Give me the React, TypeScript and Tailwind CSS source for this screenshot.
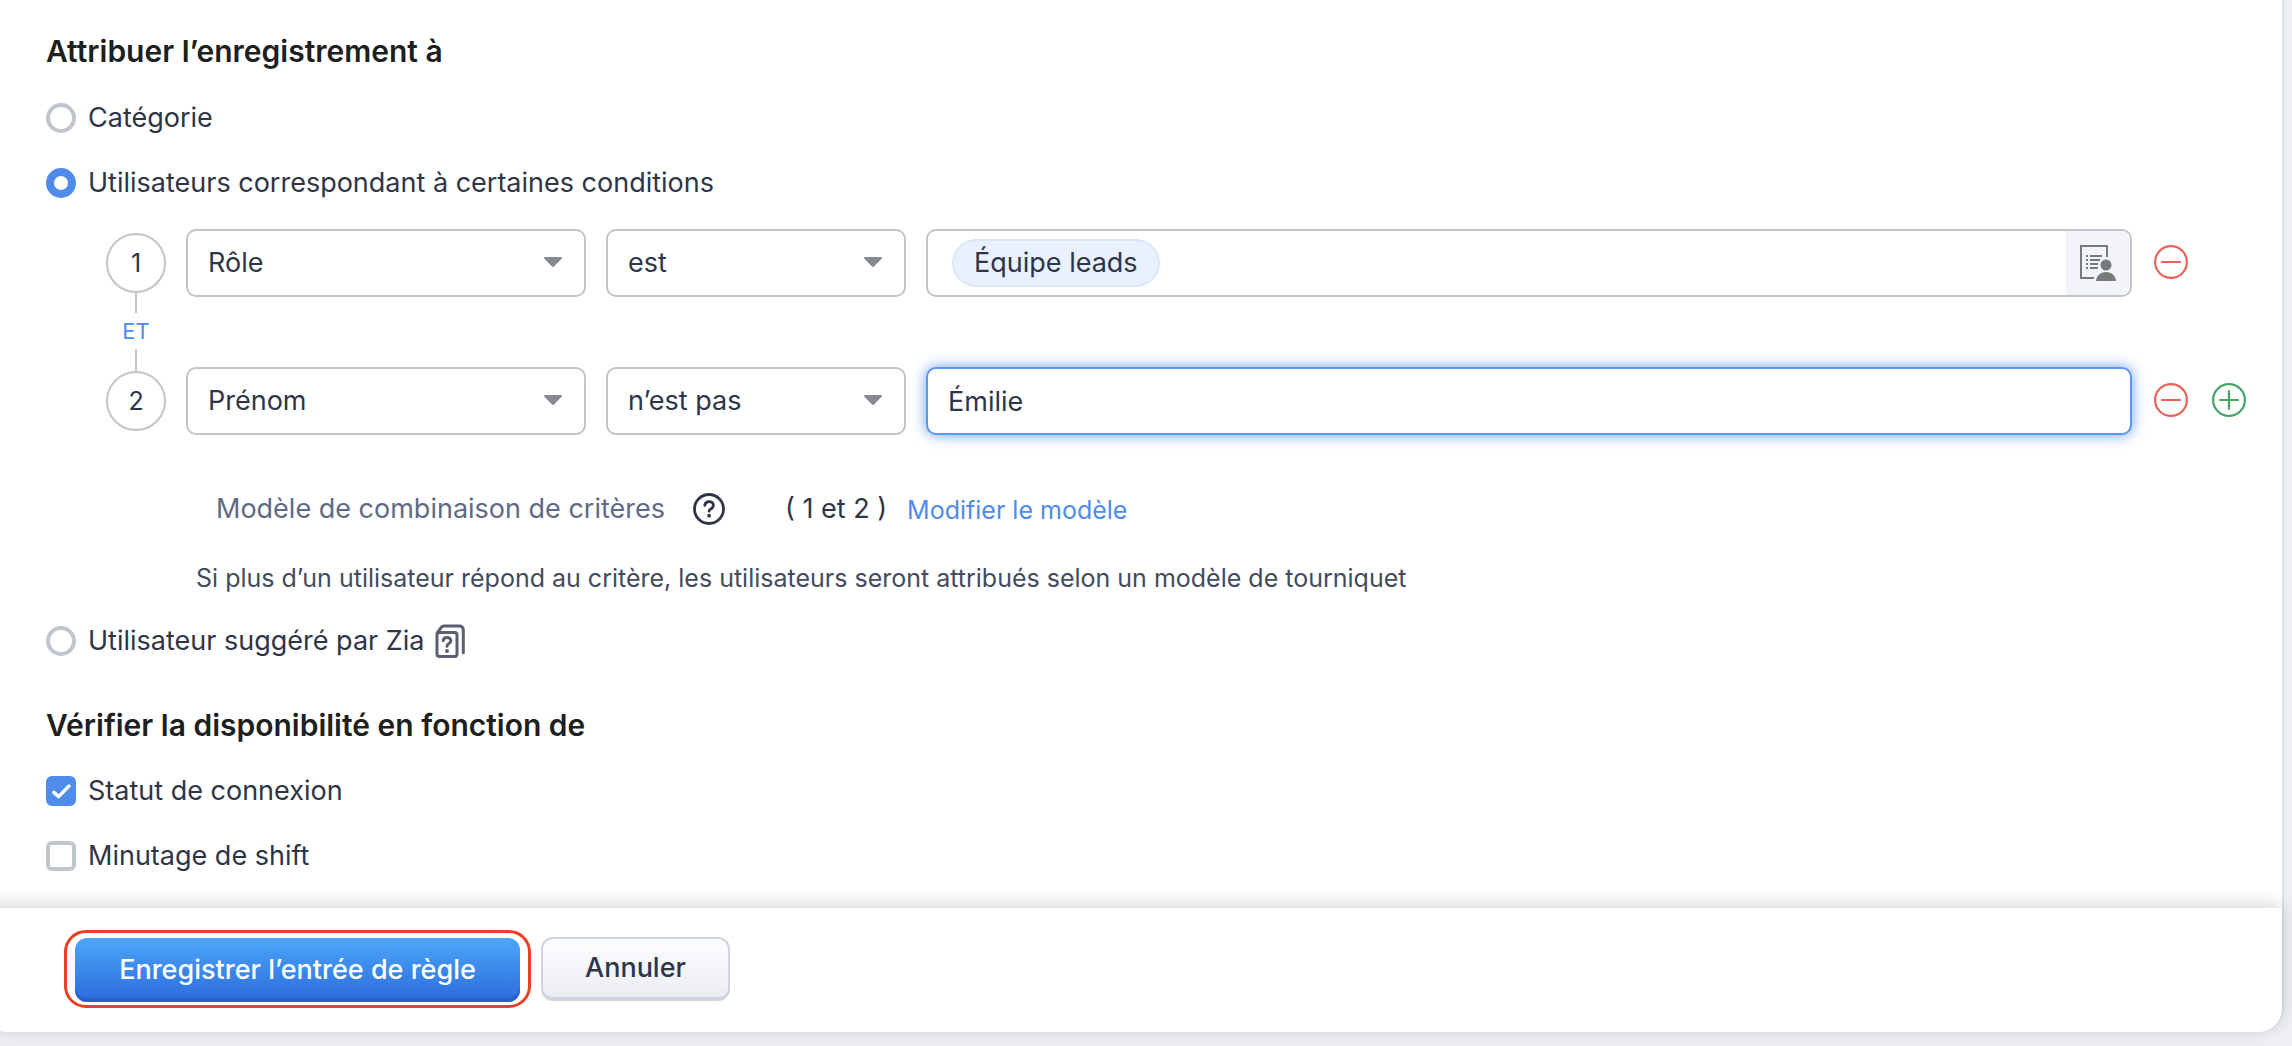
import { useState, type ReactNode } from "react";

function Radio({
  label,
  checked,
  onSelect,
}: {
  label: string;
  checked: boolean;
  onSelect: () => void;
}) {
  return (
    <label className="flex h-[30px] w-fit items-center gap-3">
      <input
        type="radio"
        name="assign"
        checked={checked}
        onChange={onSelect}
        className="size-[30px] shrink-0 appearance-none rounded-full border-4 border-[#c0c6cc] bg-white checked:border-8 checked:border-[#4e8beb]"
      />
      {label}
    </label>
  );
}

function Checkbox({ label, initial = false }: { label: string; initial?: boolean }) {
  return (
    <label className="flex h-[30px] w-fit items-center gap-3">
      <span className="grid size-[30px] shrink-0 place-items-center">
        <input
          type="checkbox"
          defaultChecked={initial}
          className="peer col-start-1 row-start-1 size-[30px] appearance-none rounded-md border-4 border-[#c0c6cc] bg-white checked:border-[#4e8beb] checked:bg-[#4e8beb]"
        />
        <svg
          viewBox="0 0 30 30"
          className="pointer-events-none col-start-1 row-start-1 hidden size-[30px] peer-checked:block"
          fill="none"
          stroke="#fff"
          strokeWidth="3.4"
          strokeLinecap="round"
          strokeLinejoin="round"
          aria-hidden="true"
        >
          <path d="M7.8 16.4l4.8 4.2L23 10" />
        </svg>
      </span>
      {label}
    </label>
  );
}

function Select({ label, options, className }: { label: string; options: string[]; className: string }) {
  return (
    <div className={"relative shrink-0 " + className}>
      <select
        aria-label={label}
        className="h-[68px] w-full appearance-none rounded-[10px] border-2 border-[#c0c6cc] bg-white pr-14 pl-5 outline-none"
      >
        {options.map((o) => (
          <option key={o}>{o}</option>
        ))}
      </select>
      <svg
        viewBox="0 0 18 10"
        className="pointer-events-none absolute top-7 right-6 h-[10px] w-[18px]"
        fill="#868892"
        aria-hidden="true"
      >
        <path d="M1 0h16c1 0 1.200 1 .6 1.700L10 9.500a1.400 1.400 0 0 1-2 0L.4 1.700C-.2 1 0 0 1 0z" />
      </svg>
    </div>
  );
}

function RoundButton({ label, className, plus = false }: { label: string; className: string; plus?: boolean }) {
  return (
    <button type="button" aria-label={label} className={"size-9 shrink-0 " + className}>
      <svg viewBox="0 0 36 36" className="size-9" fill="none" stroke="currentColor" strokeWidth="2.200" strokeLinecap="round">
        <circle cx="19" cy="17" r="15.900" />
        <path d="M10 17h18" />
        {plus && <path d="M19 8v18" />}
      </svg>
    </button>
  );
}

function StepNumber({ children }: { children: ReactNode }) {
  return (
    <span className="flex size-[60px] items-center justify-center rounded-full border-2 border-[#c0c6cc] text-[25px]">
      {children}
    </span>
  );
}

function LookupIcon() {
  return (
    <svg viewBox="0 0 36 36" className="size-9" fill="none" aria-hidden="true">
      <path d="M14 33H1V1h26v11" stroke="#777a7a" strokeWidth="2" />
      <path
        d="M6 11h2M6 15h2M6 19h2M6 23h2M10 11h12M10 15h10M10 19h8M10 23h8"
        stroke="#777a7a"
        strokeWidth="2"
      />
      <circle cx="26" cy="20" r="5.500" fill="#777a7a" />
      <path d="M16 36c.6-5.500 4.500-9 10-9s9.400 3.500 10 9z" fill="#777a7a" />
    </svg>
  );
}

function HelpIcon() {
  return (
    <svg viewBox="0 0 32 32" className="size-8" fill="none" stroke="#2f3547" strokeWidth="2.800" strokeLinecap="round" aria-hidden="true">
      <circle cx="16" cy="16" r="14.500" />
      <path d="M11.800 12.400c.3-2.400 2-3.800 4.300-3.800 2.500 0 4.300 1.500 4.300 3.700 0 1.800-1 2.800-2.500 3.600-1.200.7-1.800 1.200-1.800 2.300" />
      <circle cx="16.100" cy="22.700" r="1.900" fill="#2f3547" stroke="none" />
    </svg>
  );
}

function ZiaHelpIcon() {
  return (
    <svg viewBox="0 0 30 34" className="h-[34px] w-[30px]" fill="none" stroke="#5b6070" strokeWidth="3" strokeLinecap="round" strokeLinejoin="round" aria-hidden="true">
      <rect x="2" y="8.500" width="20" height="24" rx="2.500" />
      <path d="M2.200 9l4-5.500C6.800 2.500 7.600 2 8.800 2H24c2.600 0 4.300 1.700 4.300 4.300v22.500" />
      <path d="M8.200 16.600c.2-1.900 1.600-3.100 3.800-3.100s3.900 1.300 3.900 3.200c0 1.500-.8 2.300-2.200 3.100-1.200.7-1.700 1.200-1.700 2.400" />
      <circle cx="12" cy="27" r="2" fill="#5b6070" stroke="none" />
    </svg>
  );
}

export default function App() {
  const [assign, setAssign] = useState("conditions");
  return (
    <main className="min-h-screen bg-[#edeff3] pr-2 pb-[14px] font-['Inter',sans-serif] text-[27px] leading-[30px] text-[#2f3547]">
      <form
        className="-ml-4 rounded-b-3xl border-r-2 border-[#d9e1ed] bg-white"
        onSubmit={(e) => e.preventDefault()}
      >
        <div className="pt-[33px] pr-9 pb-[37px] pl-[62px]">
          <h2 className="text-[30px] leading-9 font-semibold text-[#1d1f20]">Attribuer l’enregistrement à</h2>
          <div className="mt-[34px] flex flex-col gap-[35px]">
            <Radio label="Catégorie" checked={assign === "category"} onSelect={() => setAssign("category")} />
            <Radio
              label="Utilisateurs correspondant à certaines conditions"
              checked={assign === "conditions"}
              onSelect={() => setAssign("conditions")}
            />
          </div>

          <div className="mt-[31px] flex gap-5 pl-[60px]">
            <div className="flex w-[60px] shrink-0 flex-col items-center pt-1">
              <StepNumber>1</StepNumber>
              <span className="h-5 w-[2px] bg-[#c0c6cc]" />
              <button type="button" className="h-9 text-[22px] leading-9 text-[#4e8beb]">
                ET
              </button>
              <span className="h-[22px] w-[2px] bg-[#c0c6cc]" />
              <StepNumber>2</StepNumber>
            </div>
            <div className="flex min-w-0 flex-1 flex-col gap-[70px]">
              <div className="flex items-center gap-5">
                <Select label="Champ 1" options={["Rôle", "Prénom"]} className="w-[400px]" />
                <Select label="Opérateur 1" options={["est", "n’est pas"]} className="w-[300px]" />
                <div className="flex h-[68px] min-w-0 flex-1 items-center overflow-hidden rounded-[10px] border-2 border-[#c0c6cc] pl-6">
                  <span className="flex h-12 items-center rounded-full border-2 border-[#dbe7f8] bg-[#e9f0fe] px-5">
                    Équipe leads
                  </span>
                  <button
                    type="button"
                    aria-label="Rechercher un rôle"
                    className="ml-auto flex h-full w-16 items-center justify-center bg-[#f3f4f7]"
                  >
                    <LookupIcon />
                  </button>
                </div>
                <div className="flex w-[94px] shrink-0 gap-[22px]">
                  <RoundButton label="Supprimer la condition 1" className="text-[#ec625b]" />
                </div>
              </div>
              <div className="flex items-center gap-5">
                <Select label="Champ 2" options={["Prénom", "Rôle"]} className="w-[400px]" />
                <Select label="Opérateur 2" options={["n’est pas", "est"]} className="w-[300px]" />
                <input
                  type="text"
                  aria-label="Valeur 2"
                  defaultValue="Émilie"
                  className="h-[68px] min-w-0 flex-1 rounded-[10px] border-2 border-[#5b98f3] bg-white px-5 shadow-[0_0_14px_rgba(60,125,225,0.75)] outline-none"
                />
                <div className="flex w-[94px] shrink-0 gap-[22px]">
                  <RoundButton label="Supprimer la condition 2" className="text-[#ec625b]" />
                  <RoundButton label="Ajouter une condition" className="text-[#46a465]" plus />
                </div>
              </div>
            </div>
          </div>

          <div className="mt-14 flex h-9 items-center pl-[170px]">
            <span className="text-[#606a86]">Modèle de combinaison de critères</span>
            <button type="button" aria-label="Aide" className="ml-7">
              <HelpIcon />
            </button>
            <span className="ml-[60px]">( 1 et 2 )</span>
            <a href="#modele" className="ml-5 pt-[2px] text-[25px] text-[#4e8beb]">
              Modifier le modèle
            </a>
          </div>
          <p className="mt-[33px] pl-[150px] text-[25px] leading-9 text-[#434b5e]">
            Si plus d’un utilisateur répond au critère, les utilisateurs seront attribués selon un modèle de tourniquet
          </p>
          <div className="mt-[30px] flex h-[30px] items-center gap-[10px]">
            <Radio label="Utilisateur suggéré par Zia" checked={assign === "zia"} onSelect={() => setAssign("zia")} />
            <button type="button" aria-label="Aide sur Zia">
              <ZiaHelpIcon />
            </button>
          </div>

          <h2 className="mt-[51px] text-[30px] leading-9 font-semibold text-[#1d1f20]">
            Vérifier la disponibilité en fonction de
          </h2>
          <div className="mt-[33px] flex flex-col gap-[35px]">
            <Checkbox label="Statut de connexion" initial />
            <Checkbox label="Minutage de shift" />
          </div>
        </div>

        <footer className="flex items-center gap-[10px] rounded-b-3xl bg-white pt-[22px] pb-6 pl-20 font-medium shadow-[0_-3px_18px_rgba(0,0,0,0.17)]">
          <div className="rounded-[22px] border-3 border-[#e94025] px-2 pt-[5px] pb-[3px]">
            <button
              type="submit"
              className="h-16 w-[445px] rounded-xl bg-linear-to-b from-[#4ca6f9] to-[#2d6bdc] text-white shadow-[inset_0_-4px_0_#2860c6]"
            >
              Enregistrer l’entrée de règle
            </button>
          </div>
          <button
            type="button"
            className="h-16 w-[189px] rounded-xl border-2 border-b-4 border-[#d0d3e0] bg-linear-to-b from-[#fcfdfe] to-[#ebedf4]"
          >
            Annuler
          </button>
        </footer>
      </form>
    </main>
  );
}
